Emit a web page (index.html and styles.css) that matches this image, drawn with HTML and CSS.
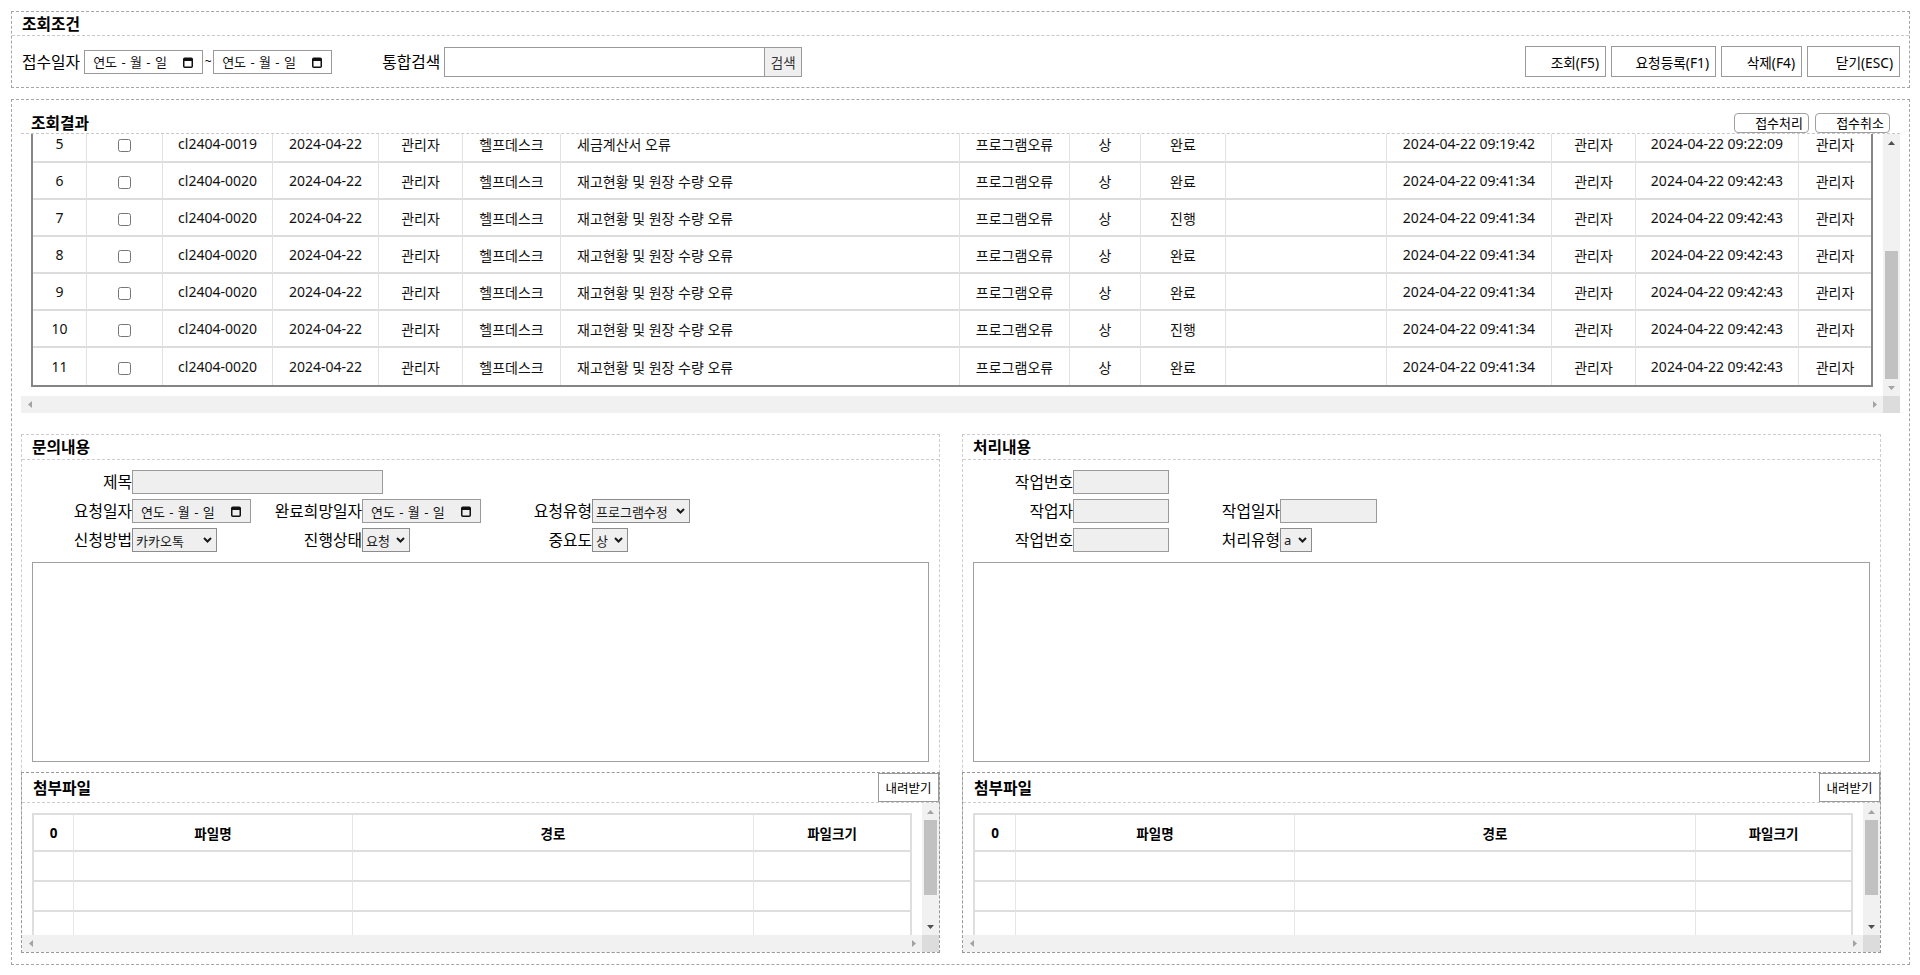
FILE: index.html
```html
<!DOCTYPE html>
<html lang="ko">
<head>
<meta charset="utf-8">
<title>접수관리</title>
<link rel="stylesheet" href="styles.css">
</head>
<body>
<div class="page">
  <section class="box box-cond">
    <div class="box-head"><span class="title">조회조건</span></div>
    <div class="cond-row">
      <span class="lbl-top">접수일자</span>
      <span class="date white"><span class="date-txt">연도 - 월 - 일</span><svg class="cal" width="10" height="12" viewBox="0 0 10 12"><rect x="0.75" y="2.25" width="8.5" height="9" rx="1" fill="none" stroke="#111" stroke-width="1.5"/><rect x="1" y="2.5" width="8" height="2.5" fill="#111"/></svg></span>
      <span class="tilde">~</span>
      <span class="date white"><span class="date-txt">연도 - 월 - 일</span><svg class="cal" width="10" height="12" viewBox="0 0 10 12"><rect x="0.75" y="2.25" width="8.5" height="9" rx="1" fill="none" stroke="#111" stroke-width="1.5"/><rect x="1" y="2.5" width="8" height="2.5" fill="#111"/></svg></span>
      <span class="lbl-top lbl-search">통합검색</span>
      <input class="search-inp" type="text">
      <button class="btn-search" type="button">검색</button>
      <div class="actions">
        <button class="btn-act w81" type="button">조회(F5)</button>
        <button class="btn-act w105" type="button">요청등록(F1)</button>
        <button class="btn-act w81" type="button">삭제(F4)</button>
        <button class="btn-act w93" type="button">닫기(ESC)</button>
      </div>
    </div>
  </section>

  <section class="box box-main">
    <div class="result-head">
      <span class="title">조회결과</span>
      <div class="result-btns">
        <button class="btn-round" type="button">접수처리</button>
        <button class="btn-round" type="button">접수취소</button>
      </div>
    </div>
    <div class="sc grid-sc">
      <div class="sc-view">
        <table class="grid">
          <colgroup>
            <col class="c54"><col class="c76"><col class="c110"><col class="c106"><col class="c84"><col class="c98"><col class="c399"><col class="c110"><col class="c71"><col class="c85"><col class="c161"><col class="c165"><col class="c84"><col class="c163"><col>
          </colgroup>
          <tbody>
            <tr><td>5</td><td><input type="checkbox"></td><td>cl2404-0019</td><td>2024-04-22</td><td>관리자</td><td>헬프데스크</td><td class="tl">세금계산서 오류</td><td>프로그램오류</td><td>상</td><td>완료</td><td></td><td>2024-04-22 09:19:42</td><td>관리자</td><td>2024-04-22 09:22:09</td><td>관리자</td></tr>
            <tr><td>6</td><td><input type="checkbox"></td><td>cl2404-0020</td><td>2024-04-22</td><td>관리자</td><td>헬프데스크</td><td class="tl">재고현황 및 원장 수량 오류</td><td>프로그램오류</td><td>상</td><td>완료</td><td></td><td>2024-04-22 09:41:34</td><td>관리자</td><td>2024-04-22 09:42:43</td><td>관리자</td></tr>
            <tr><td>7</td><td><input type="checkbox"></td><td>cl2404-0020</td><td>2024-04-22</td><td>관리자</td><td>헬프데스크</td><td class="tl">재고현황 및 원장 수량 오류</td><td>프로그램오류</td><td>상</td><td>진행</td><td></td><td>2024-04-22 09:41:34</td><td>관리자</td><td>2024-04-22 09:42:43</td><td>관리자</td></tr>
            <tr><td>8</td><td><input type="checkbox"></td><td>cl2404-0020</td><td>2024-04-22</td><td>관리자</td><td>헬프데스크</td><td class="tl">재고현황 및 원장 수량 오류</td><td>프로그램오류</td><td>상</td><td>완료</td><td></td><td>2024-04-22 09:41:34</td><td>관리자</td><td>2024-04-22 09:42:43</td><td>관리자</td></tr>
            <tr><td>9</td><td><input type="checkbox"></td><td>cl2404-0020</td><td>2024-04-22</td><td>관리자</td><td>헬프데스크</td><td class="tl">재고현황 및 원장 수량 오류</td><td>프로그램오류</td><td>상</td><td>완료</td><td></td><td>2024-04-22 09:41:34</td><td>관리자</td><td>2024-04-22 09:42:43</td><td>관리자</td></tr>
            <tr><td>10</td><td><input type="checkbox"></td><td>cl2404-0020</td><td>2024-04-22</td><td>관리자</td><td>헬프데스크</td><td class="tl">재고현황 및 원장 수량 오류</td><td>프로그램오류</td><td>상</td><td>진행</td><td></td><td>2024-04-22 09:41:34</td><td>관리자</td><td>2024-04-22 09:42:43</td><td>관리자</td></tr>
            <tr><td>11</td><td><input type="checkbox"></td><td>cl2404-0020</td><td>2024-04-22</td><td>관리자</td><td>헬프데스크</td><td class="tl">재고현황 및 원장 수량 오류</td><td>프로그램오류</td><td>상</td><td>완료</td><td></td><td>2024-04-22 09:41:34</td><td>관리자</td><td>2024-04-22 09:42:43</td><td>관리자</td></tr>
          </tbody>
        </table>
      </div>
      <div class="vbar">
        <span class="sbtn"><svg width="7" height="4" viewBox="0 0 7 4"><path d="M0 4L3.5 0L7 4z" fill="#505050"/></svg></span>
        <span class="track"><span class="thumb"></span></span>
        <span class="sbtn"><svg width="7" height="4" viewBox="0 0 7 4"><path d="M0 0L3.5 4L7 0z" fill="#a3a3a3"/></svg></span>
      </div>
      <div class="hbar">
        <span class="sbtn"><svg width="4" height="7" viewBox="0 0 4 7"><path d="M4 0L0 3.5L4 7z" fill="#a3a3a3"/></svg></span>
        <span class="track"></span>
        <span class="sbtn"><svg width="4" height="7" viewBox="0 0 4 7"><path d="M0 0L4 3.5L0 7z" fill="#a3a3a3"/></svg></span>
      </div>
      <div class="corner"></div>
    </div>

    <div class="lower">
      <div class="panel panel-left">
        <div class="panel-head"><span class="title">문의내용</span></div>
        <div class="panel-body">
          <div class="form">
            <div class="frow">
              <div class="fc"><span class="fl">제목</span><input class="inp w251" type="text"></div>
            </div>
            <div class="frow">
              <div class="fc"><span class="fl">요청일자</span><span class="date gray"><span class="date-txt">연도 - 월 - 일</span><svg class="cal" width="10" height="12" viewBox="0 0 10 12"><rect x="0.75" y="2.25" width="8.5" height="9" rx="1" fill="none" stroke="#111" stroke-width="1.5"/><rect x="1" y="2.5" width="8" height="2.5" fill="#111"/></svg></span></div>
              <div class="fc"><span class="fl">완료희망일자</span><span class="date gray"><span class="date-txt">연도 - 월 - 일</span><svg class="cal" width="10" height="12" viewBox="0 0 10 12"><rect x="0.75" y="2.25" width="8.5" height="9" rx="1" fill="none" stroke="#111" stroke-width="1.5"/><rect x="1" y="2.5" width="8" height="2.5" fill="#111"/></svg></span></div>
              <div class="fc"><span class="fl">요청유형</span><span class="sel w98"><span>프로그램수정</span><svg width="9" height="6" viewBox="0 0 9 6"><path d="M1 1l3.5 3.5L8 1" fill="none" stroke="#1a1a1a" stroke-width="2"/></svg></span></div>
            </div>
            <div class="frow">
              <div class="fc"><span class="fl">신청방법</span><span class="sel w85"><span>카카오톡</span><svg width="9" height="6" viewBox="0 0 9 6"><path d="M1 1l3.5 3.5L8 1" fill="none" stroke="#1a1a1a" stroke-width="2"/></svg></span></div>
              <div class="fc"><span class="fl">진행상태</span><span class="sel w48"><span>요청</span><svg width="9" height="6" viewBox="0 0 9 6"><path d="M1 1l3.5 3.5L8 1" fill="none" stroke="#1a1a1a" stroke-width="2"/></svg></span></div>
              <div class="fc"><span class="fl">중요도</span><span class="sel w36"><span>상</span><svg width="9" height="6" viewBox="0 0 9 6"><path d="M1 1l3.5 3.5L8 1" fill="none" stroke="#1a1a1a" stroke-width="2"/></svg></span></div>
            </div>
          </div>
          <textarea class="memo"></textarea>
        </div>
        <div class="attach">
          <div class="attach-head"><span class="title">첨부파일</span><button class="down-btn" type="button">내려받기</button></div>
          <div class="sc att-sc">
            <div class="sc-view">
              <table class="ftable">
                <colgroup><col class="f40"><col class="f279"><col class="f401"><col></colgroup>
                <thead><tr><th>0</th><th>파일명</th><th>경로</th><th>파일크기</th></tr></thead>
                <tbody>
                  <tr><td></td><td></td><td></td><td></td></tr>
                  <tr><td></td><td></td><td></td><td></td></tr>
                  <tr><td></td><td></td><td></td><td></td></tr>
                  <tr><td></td><td></td><td></td><td></td></tr>
                </tbody>
              </table>
            </div>
            <div class="vbar">
              <span class="sbtn"><svg width="7" height="4" viewBox="0 0 7 4"><path d="M0 4L3.5 0L7 4z" fill="#a3a3a3"/></svg></span>
              <span class="track"><span class="thumb"></span></span>
              <span class="sbtn"><svg width="7" height="4" viewBox="0 0 7 4"><path d="M0 0L3.5 4L7 0z" fill="#505050"/></svg></span>
            </div>
            <div class="hbar">
              <span class="sbtn"><svg width="4" height="7" viewBox="0 0 4 7"><path d="M4 0L0 3.5L4 7z" fill="#a3a3a3"/></svg></span>
              <span class="track"></span>
              <span class="sbtn"><svg width="4" height="7" viewBox="0 0 4 7"><path d="M0 0L4 3.5L0 7z" fill="#a3a3a3"/></svg></span>
            </div>
            <div class="corner"></div>
          </div>
        </div>
      </div>

      <div class="panel panel-right">
        <div class="panel-head"><span class="title">처리내용</span></div>
        <div class="panel-body">
          <div class="form">
            <div class="frow">
              <div class="fc"><span class="fl">작업번호</span><input class="inp w96" type="text"></div>
            </div>
            <div class="frow">
              <div class="fc"><span class="fl">작업자</span><input class="inp w96" type="text"></div>
              <div class="fc"><span class="fl">작업일자</span><input class="inp w97" type="text"></div>
            </div>
            <div class="frow">
              <div class="fc"><span class="fl">작업번호</span><input class="inp w96" type="text"></div>
              <div class="fc"><span class="fl">처리유형</span><span class="sel w32"><span>a</span><svg width="9" height="6" viewBox="0 0 9 6"><path d="M1 1l3.5 3.5L8 1" fill="none" stroke="#1a1a1a" stroke-width="2"/></svg></span></div>
            </div>
          </div>
          <textarea class="memo"></textarea>
        </div>
        <div class="attach">
          <div class="attach-head"><span class="title">첨부파일</span><button class="down-btn" type="button">내려받기</button></div>
          <div class="sc att-sc">
            <div class="sc-view">
              <table class="ftable">
                <colgroup><col class="f41"><col class="f279"><col class="f401"><col></colgroup>
                <thead><tr><th>0</th><th>파일명</th><th>경로</th><th>파일크기</th></tr></thead>
                <tbody>
                  <tr><td></td><td></td><td></td><td></td></tr>
                  <tr><td></td><td></td><td></td><td></td></tr>
                  <tr><td></td><td></td><td></td><td></td></tr>
                  <tr><td></td><td></td><td></td><td></td></tr>
                </tbody>
              </table>
            </div>
            <div class="vbar">
              <span class="sbtn"><svg width="7" height="4" viewBox="0 0 7 4"><path d="M0 4L3.5 0L7 4z" fill="#a3a3a3"/></svg></span>
              <span class="track"><span class="thumb"></span></span>
              <span class="sbtn"><svg width="7" height="4" viewBox="0 0 7 4"><path d="M0 0L3.5 4L7 0z" fill="#505050"/></svg></span>
            </div>
            <div class="hbar">
              <span class="sbtn"><svg width="4" height="7" viewBox="0 0 4 7"><path d="M4 0L0 3.5L4 7z" fill="#a3a3a3"/></svg></span>
              <span class="track"></span>
              <span class="sbtn"><svg width="4" height="7" viewBox="0 0 4 7"><path d="M0 0L4 3.5L0 7z" fill="#a3a3a3"/></svg></span>
            </div>
            <div class="corner"></div>
          </div>
        </div>
      </div>
    </div>
  </section>
</div>
</body>
</html>
```

FILE: styles.css
```css
* { box-sizing: border-box; }
html, body { margin: 0; padding: 0; }
body {
  font-family: "Noto Sans", "Noto Sans CJK KR", sans-serif;
  font-size: 14px;
  color: #000;
  background: #fff;
}
button, input, textarea { font-family: inherit; color: inherit; }

.page {
  height: 975px;
  padding: 11px 10px 10px 11px;
  display: flex;
  flex-direction: column;
  gap: 11px;
}
.box { border: 1px dashed #a6a6a6; }
.title { font-weight: 700; font-size: 15.8px; line-height: 20px; white-space: nowrap; }

/* 조회조건 */
.box-cond { flex: none; }
.box-head {
  height: 24px;
  border-bottom: 1px dashed #c8c8c8;
  padding: 0 10px;
  display: flex;
  align-items: center;
}
.cond-row {
  height: 51px;
  display: flex;
  align-items: center;
  padding: 0 9px 0 10px;
}
.lbl-top { font-size: 15.8px; line-height: 24px; margin-right: 4px; white-space: nowrap; }
.lbl-search { margin-left: 50px; }
.date {
  display: inline-flex;
  align-items: center;
  justify-content: space-between;
  width: 119px;
  height: 24px;
  border: 1px solid #9a9a9a;
  padding: 0 9px 0 8px;
  font-size: 13px;
  flex: none;
}
.date.white { background: #fff; }
.date.gray { background: #efefef; }
.date-txt { white-space: nowrap; word-spacing: 1px; color: #111; }
.cal { flex: none; }
.tilde { width: 10px; text-align: center; font-size: 12px; flex: none; }
.search-inp {
  width: 321px;
  height: 30px;
  border: 1px solid #9a9a9a;
  background: #fff;
  padding: 0 4px;
  flex: none;
}
.btn-search {
  width: 37px;
  height: 30px;
  border: 1px solid #9a9a9a;
  border-left: 0;
  background: #efefef;
  font-size: 13.5px;
  color: #333;
  padding: 0;
  flex: none;
}
.actions { margin-left: auto; display: flex; gap: 5px; }
.btn-act {
  height: 31px;
  border: 1px solid #9a9a9a;
  background: #fff;
  font-size: 13.7px;
  text-align: right;
  padding: 0 6px 0 0;
  white-space: nowrap;
}
.w81 { width: 81px; }
.w105 { width: 105px; }
.w93 { width: 93px; }

/* 조회결과 */
.box-main {
  flex: 1;
  min-height: 0;
  padding: 9px 9px 11px 9px;
  display: flex;
  flex-direction: column;
}
.result-head {
  height: 25px;
  flex: none;
  border-bottom: 1px dashed #c8c8c8;
  display: flex;
  justify-content: space-between;
  align-items: flex-end;
  padding: 0 10px;
}
.result-btns { display: flex; gap: 6px; }
.btn-round {
  width: 75px;
  height: 20px;
  border: 1px solid #a0a0a0;
  border-radius: 4px;
  background: #fff;
  font-size: 13px;
  line-height: 18px;
  text-align: right;
  padding: 0 5px 0 0;
  white-space: nowrap;
}

/* scroll frames with classic scrollbars */
.sc {
  display: grid;
  grid-template-columns: minmax(0, 1fr) 17px;
  grid-template-rows: minmax(0, 1fr) 17px;
}
.sc-view { overflow: hidden; padding: 10px; min-height: 0; }
.vbar, .hbar { display: flex; background: #f1f1f1; }
.vbar { flex-direction: column; }
.sbtn { width: 17px; height: 17px; flex: none; display: flex; align-items: center; justify-content: center; }
.track { flex: 1; display: flex; flex-direction: column; min-height: 0; }
.vbar .track { padding: 0 2px; }
.thumb { background: #c1c1c1; flex: none; }
.corner { background: #dcdcdc; }

.grid-sc { height: 279px; flex: none; }
.grid-sc .sc-view { padding: 0 10px; }
.grid-sc .thumb { height: 128px; margin-top: auto; }
.att-sc { flex: 1; min-height: 0; }
.att-sc .thumb { height: 75px; }

.grid {
  width: 100%;
  margin-top: -10px;
  table-layout: fixed;
  border-collapse: separate;
  border-spacing: 0;
  border: 2px solid #858585;
}
.grid td {
  height: 37px;
  padding: 0;
  border-right: 1px solid #e2e2e2;
  border-bottom: 2px solid #dcdcdc;
  text-align: center;
  font-size: 14px;
  color: #111;
  white-space: nowrap;
  overflow: hidden;
}
.grid tr > td:last-child { border-right: 0; }
.grid tbody tr:last-child td { border-bottom: 0; }
.grid td.tl { text-align: left; padding-left: 16px; }
.grid input[type=checkbox] { margin: 0; vertical-align: middle; }
.c54 { width: 54px; } .c76 { width: 76px; } .c110 { width: 110px; } .c106 { width: 106px; }
.c84 { width: 84px; } .c98 { width: 98px; } .c399 { width: 399px; } .c71 { width: 71px; }
.c85 { width: 85px; } .c161 { width: 161px; } .c165 { width: 165px; } .c163 { width: 163px; }

/* 하단 패널 */
.lower {
  flex: 1;
  min-height: 0;
  margin-top: 21px;
  display: flex;
  gap: 22px;
}
.panel {
  width: 919px;
  flex: none;
  border: 1px dashed #cccccc;
  display: flex;
  flex-direction: column;
}
.panel-head {
  height: 25px;
  flex: none;
  border-bottom: 1px dashed #cccccc;
  padding-left: 10px;
  display: flex;
  align-items: center;
}
.panel-body { flex: none; padding: 10px; }
.form { display: flex; flex-direction: column; gap: 5px; }
.frow { display: flex; height: 24px; align-items: center; }
.fc { display: flex; align-items: center; width: 230px; flex: none; }
.panel-right .fc { width: 207px; }
.fl {
  width: 100px;
  flex: none;
  text-align: right;
  font-size: 15.8px;
  line-height: 24px;
  white-space: nowrap;
}
.inp {
  height: 24px;
  border: 1px solid #9a9a9a;
  background: #efefef;
  padding: 0 3px;
  flex: none;
}
.w251 { width: 251px; }
.w96 { width: 96px; }
.w97 { width: 97px; }
.sel {
  display: inline-flex;
  align-items: center;
  justify-content: space-between;
  height: 24px;
  border: 1px solid #8c8c8c;
  background: #efefef;
  padding: 0 4px 0 3px;
  font-size: 13px;
  color: #1a1a1a;
  white-space: nowrap;
  flex: none;
}
.sel svg { flex: none; margin-left: 2px; }
.w98 { width: 98px; } .w85 { width: 85px; } .w48 { width: 48px; } .w36 { width: 36px; } .w32 { width: 32px; }
.memo {
  display: block;
  width: 100%;
  height: 200px;
  margin: 10px 0 0 0;
  border: 1px solid #a0a0a0;
  background: #fff;
  resize: none;
  padding: 4px;
}

/* 첨부파일 */
.attach {
  flex: 1;
  min-height: 0;
  margin: 0 -1px -1px -1px;
  border: 1px dashed #999;
  display: flex;
  flex-direction: column;
}
.attach-head {
  height: 30px;
  flex: none;
  border-bottom: 1px dashed #cccccc;
  display: flex;
  align-items: center;
  justify-content: space-between;
  padding-left: 11px;
}
.down-btn {
  align-self: flex-start;
  width: 61px;
  height: 29px;
  border: 1px solid #999;
  background: #fff;
  font-size: 12.5px;
  padding: 0;
  white-space: nowrap;
}
.ftable {
  width: 100%;
  table-layout: fixed;
  border-collapse: separate;
  border-spacing: 0;
  border: 2px solid #dedede;
}
.ftable th, .ftable td {
  padding: 0;
  border-right: 1px solid #e6e6e6;
  border-bottom: 2px solid #dedede;
  text-align: center;
  font-size: 13.5px;
}
.ftable th { height: 37px; font-weight: 700; }
.ftable td { height: 30px; }
.ftable tr > *:last-child { border-right: 0; }
.ftable tbody tr:last-child td { border-bottom: 0; }
.f40 { width: 40px; } .f41 { width: 41px; } .f279 { width: 279px; } .f401 { width: 401px; }
```
